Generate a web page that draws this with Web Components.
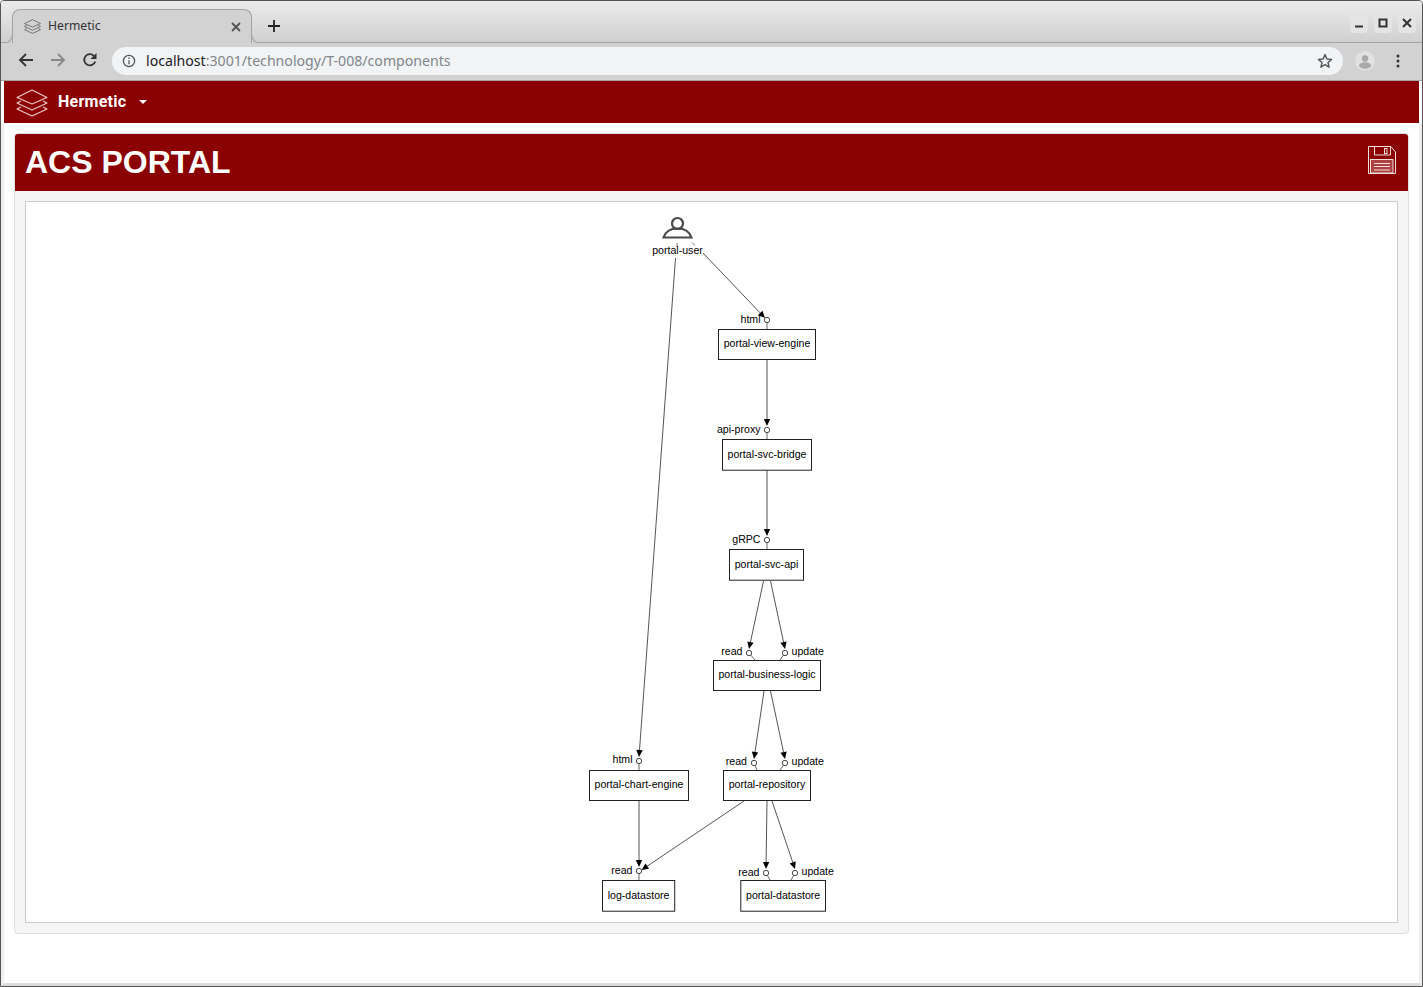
<!DOCTYPE html>
<html><head><meta charset="utf-8"><style>
html,body{margin:0;padding:0;height:100%;background:#fff;overflow:hidden}
</style></head><body>
<app-window>
  <browser-tabs slot="chrome"></browser-tabs>
  <browser-toolbar slot="chrome"></browser-toolbar>
  <brand-bar slot="chrome"></brand-bar>
  <panel-card heading="ACS PORTAL"><component-diagram></component-diagram></panel-card>
</app-window>
<script>
const STACK=(w,h,c,sw)=>`<svg width="${w}" height="${h}" viewBox="0 0 32 28" fill="none" stroke="${c}" stroke-width="${sw}" stroke-linejoin="round"><path d="M16 1 31 8.5 16 15 1 8.5Z"/><path d="M5 12 1 14 16 21 31 14 27 12"/><path d="M5 18 1 20 16 27 31 20 27 18"/></svg>`;
function def(name,html,init){customElements.define(name,class extends HTMLElement{constructor(){super();this.attachShadow({mode:'open'}).innerHTML=typeof html==='function'?html(this):html;}connectedCallback(){if(init&&!this._i){this._i=1;init(this)}}})}

def('app-window',`<style>
:host{display:flex;flex-direction:column;box-sizing:border-box;width:1423px;height:987px;border:1px solid #555;border-radius:4px 4px 0 0;background:#fff;overflow:hidden}
.c{display:flex;flex-direction:column;flex:none}
.m{flex:1;box-sizing:border-box;border:solid #efefef;border-width:0 3px;border-bottom:3px solid #dcdcdc;display:flex;flex-direction:column;min-height:0;background:#fff}
</style><div class="c"><slot name="chrome"></slot></div><div class="m"><slot></slot></div>`);

def('browser-tabs',`<style>
:host{display:flex;align-items:flex-end;height:42px;flex:none;box-sizing:border-box;background:linear-gradient(#ebebeb,#d0d0d0);border-bottom:1px solid #a3a3a3;padding-left:11px;position:relative;font:12.2px "Noto Sans",sans-serif;color:#333}
.tab{box-sizing:border-box;width:240px;height:34px;margin-bottom:-1px;background:#d2d2d2;border:1px solid #a3a3a3;border-bottom:0;border-radius:8px 8px 0 0;display:flex;align-items:center;padding:0 10px 0 11px;gap:7px;position:relative}
.tab::before,.tab::after{content:"";position:absolute;bottom:0;width:8px;height:8px}
.tab::before{left:-9px;background:radial-gradient(circle at 0 0,transparent 7.4px,#a3a3a3 7.9px,#a3a3a3 8.4px,#d2d2d2 8.9px)}
.tab::after{right:-9px;background:radial-gradient(circle at 100% 0,transparent 7.4px,#a3a3a3 7.9px,#a3a3a3 8.4px,#d2d2d2 8.9px)}
.tab span{flex:1;padding-bottom:2px}
.plus{margin-left:16px;align-self:center;display:flex;margin-top:8px}
.win{position:absolute;right:6px;top:12px;display:flex;gap:6px}
.win div{width:18px;height:20px;border-radius:4px;background:#e4e4e4;display:flex;align-items:center;justify-content:center}
</style>
<div class="tab">${STACK(17,15,'#666',1.6)}<span>Hermetic</span><svg width="10" height="10" viewBox="0 0 10 10" stroke="#555" stroke-width="1.8"><path d="M1 1 9 9M9 1 1 9"/></svg></div>
<div class="plus"><svg width="12" height="12" viewBox="0 0 12 12" stroke="#222" stroke-width="1.8"><path d="M6 0V12M0 6H12"/></svg></div>
<div class="win"><div><svg width="10" height="10"><path d="M1 8.5H9" stroke="#333" stroke-width="2"/></svg></div><div><svg width="10" height="10"><rect x="1.5" y="1.5" width="7" height="7" fill="none" stroke="#333" stroke-width="2"/></svg></div><div><svg width="10" height="10"><path d="M1 1 9 9M9 1 1 9" stroke="#333" stroke-width="2"/></svg></div></div>`);

def('browser-toolbar',`<style>
:host{display:flex;align-items:center;height:38px;flex:none;box-sizing:border-box;background:#d2d2d2;border-bottom:1px solid #a3a3a3;padding:0 0 1px 17px;font:14.14px "Noto Sans",sans-serif}
.b{display:flex;width:16px;height:16px;margin:0 16px 2px 0}
.url{box-sizing:border-box;width:1231px;height:28px;border-radius:14px;background:#f1f3f4;display:flex;align-items:center;padding:0 10px 0 10px;margin-left:-2px;color:#80868b}
.url b{font-weight:400;color:#202124}
.url span{flex:1;margin-left:10px;white-space:nowrap;padding-bottom:1px}
.p{width:20px;height:20px;border-radius:50%;background:#e1e1e1;margin-left:12px;display:flex;align-items:center;justify-content:center;overflow:hidden}
.d{margin-left:21px;display:flex}
</style>
<div class="b"><svg width="16" height="16" viewBox="0 0 16 16" fill="none" stroke="#333" stroke-width="1.8"><path d="M15 8H2M8 2 2 8 8 14"/></svg></div>
<div class="b"><svg width="16" height="16" viewBox="0 0 16 16" fill="none" stroke="#888" stroke-width="1.8"><path d="M1 8H14M8 2 14 8 8 14"/></svg></div>
<div class="b"><svg width="16" height="16" viewBox="0 0 16 16" fill="none" stroke="#333" stroke-width="1.8"><path d="M13.2 9.5A5.6 5.6 0 1 1 11.8 3.8"/><path d="M14.5 1V7H8.5Z" fill="#333" stroke="none"/></svg></div>
<div class="url"><svg width="14" height="14" viewBox="0 0 14 14" fill="none" stroke="#555" stroke-width="1.3"><circle cx="7" cy="7" r="5.6"/><path d="M7 6.2V10.2M7 3.6V5" /></svg><span><b>localhost</b>:3001/technology/T-008/components</span><svg width="16" height="16" viewBox="0 0 16 16" fill="none" stroke="#555" stroke-width="1.4" stroke-linejoin="round"><path d="M8 1.6 9.9 6 14.6 6.4 11 9.5 12.1 14.2 8 11.7 3.9 14.2 5 9.5 1.4 6.4 6.1 6Z"/></svg></div>
<div class="p"><svg width="20" height="20" viewBox="0 0 20 20" fill="#a9a9a9"><circle cx="10" cy="7.5" r="3.2"/><ellipse cx="10" cy="14.5" rx="6" ry="3.2"/></svg></div>
<div class="d"><svg width="4" height="14" viewBox="0 0 4 14" fill="#333"><circle cx="2" cy="2" r="1.5"/><circle cx="2" cy="7" r="1.5"/><circle cx="2" cy="12" r="1.5"/></svg></div>`);

def('brand-bar',`<style>
:host{display:flex;align-items:center;height:42px;flex:none;margin:0 3px;background:#8b0000;padding-left:12px;color:#fff;font:700 16px Roboto,sans-serif;letter-spacing:.25px}
span{margin-left:10px;padding-bottom:2px}
svg{margin-top:2px}
i{margin-left:13px;width:0;height:0;border:4.5px solid transparent;border-top-color:#fff;border-bottom:0}
</style>${STACK(32,28,'#eccaca',1.1)}<span>Hermetic</span><i></i>`);

def('panel-card',h=>`<style>
:host{display:flex;flex-direction:column;flex:none;box-sizing:border-box;margin:10px 0 0 10px;height:801px;width:1395px;background:#f5f5f5;border:1px solid #ddd;border-radius:4px;overflow:hidden}
header{height:57px;flex:none;background:#8b0000;color:#fff;display:flex;align-items:center;justify-content:space-between;padding:0 12px 0 10px}
h1{margin:0;font:700 32px/1 "Liberation Sans",sans-serif;padding-bottom:2px}
svg{margin-bottom:5px}
.b{flex:1;padding:10px;min-height:0;display:flex}
</style><header><h1>${h.getAttribute('heading')}</h1><svg width="28" height="28" viewBox="0 0 28 28" fill="none" stroke="#f0dede" stroke-width="1"><path d="M.5.5H23L27.5 6V27.5H.5Z"/><path d="M6.5.5V9H22.5V.5"/><rect x="16.5" y="2.5" width="2.5" height="5"/><rect x="2.5" y="13.5" width="22.5" height="13.5" fill="#c46a6a" fill-opacity=".6"/><path d="M6 17.5H22M6 20.5H22M6 24H22"/></svg></header><div class="b"><slot></slot></div>`);

const NODES=[
 ['portal-view-engine',718.5,329.5,97,30],['portal-svc-bridge',722.5,439.5,89,30.7],['portal-svc-api',729.5,549.5,74,30.7],
 ['portal-business-logic',713.5,660.5,107,30],['portal-chart-engine',589.5,770.5,99,30],['portal-repository',723.5,770.5,87,30],
 ['log-datastore',602.5,880.5,72.2,30.7],['portal-datastore',740.8,880.5,84.7,30.7]];
const PORTS=[
 [767,320,'html','end',760.5,767,329,323],[767,430,'api-proxy','end',760.5,767,439,433],[767,540,'gRPC','end',760.5,767,549,543],
 [749,653,'read','end',742.5,755,660,655],[785,653,'update','start',791.5,780,660,655],
 [754,763,'read','end',747,757,770,765],[785,763,'update','start',791.5,780,770,765],
 [639,761,'html','end',632.5,639,770,763],[639,871,'read','end',632.5,639,880,874],
 [766,873,'read','end',759.5,770,880,876],[795,873,'update','start',801.5,791,880,875]];
const EDGES=[
 [675.5,258,639,757],[703,253,765,318],[767,360,767,426],[767,470,767,536],
 [763.5,581,749,649],[770.5,581,785,649],[764,691,754,759],[770.5,691,785,759],
 [639,801,639,867],[744,801,641.5,870],[767,801,766,869],[772,801,795,869]];

def('component-diagram',`<style>
:host{display:block;flex:1;box-sizing:border-box;background:#fff;border:1px solid #ccc;overflow:hidden}
svg{display:block}
text{font:10.6px "Liberation Sans",sans-serif;fill:#000}
</style><svg width="1371" height="720" viewBox="26 202 1371 720"></svg>`,el=>{
 let s='';
 s+=`<g fill="none" stroke="#4a4a4a" stroke-width="2.2"><circle cx="677.5" cy="223.5" r="5.5"/><path d="M663.5 237.5C665.5 231.5 671 228.5 677.5 228.5S689.5 231.5 691.5 237.5Z" /></g>`;
 s+=`<g stroke="#555" stroke-width=".8"><path d="M677 243V247M692 242.5 695 245.5"/></g><text x="677.5" y="254" text-anchor="middle">portal-user</text>`;
 for(const [x1,y1,x2,y2] of EDGES){
  const a=Math.atan2(y2-y1,x2-x1),l=7,w=3.2;
  const bx=x2-Math.cos(a)*l,by=y2-Math.sin(a)*l,nx=-Math.sin(a)*w,ny=Math.cos(a)*w;
  s+=`<path d="M${x1} ${y1}L${bx} ${by}" stroke="#555" stroke-width="1"/><path d="M${x2} ${y2}L${bx+nx} ${by+ny}L${bx-nx} ${by-ny}Z" fill="#000"/>`;
 }
 for(const [x,y,t,an,lx,ex,ey,ly] of PORTS){
  s+=`<path d="M${x+(ex-x)*.3} ${y+(ey-y)*.3}L${ex} ${ey}" stroke="#666" stroke-width="1"/><circle cx="${x}" cy="${y}" r="2.7" fill="#fff" stroke="#333" stroke-width=".9"/><text x="${lx}" y="${ly}" text-anchor="${an}">${t}</text>`;
 }
 for(const [t,x,y,w,h] of NODES){
  s+=`<rect x="${x}" y="${y}" width="${w}" height="${h}" fill="#fff" stroke="#222" stroke-width="1"/><text x="${x+w/2}" y="${y+(h>30?18.5:17)}" text-anchor="middle">${t}</text>`;
 }
 el.shadowRoot.querySelector('svg').innerHTML=s;
});
</script>
</body></html>
